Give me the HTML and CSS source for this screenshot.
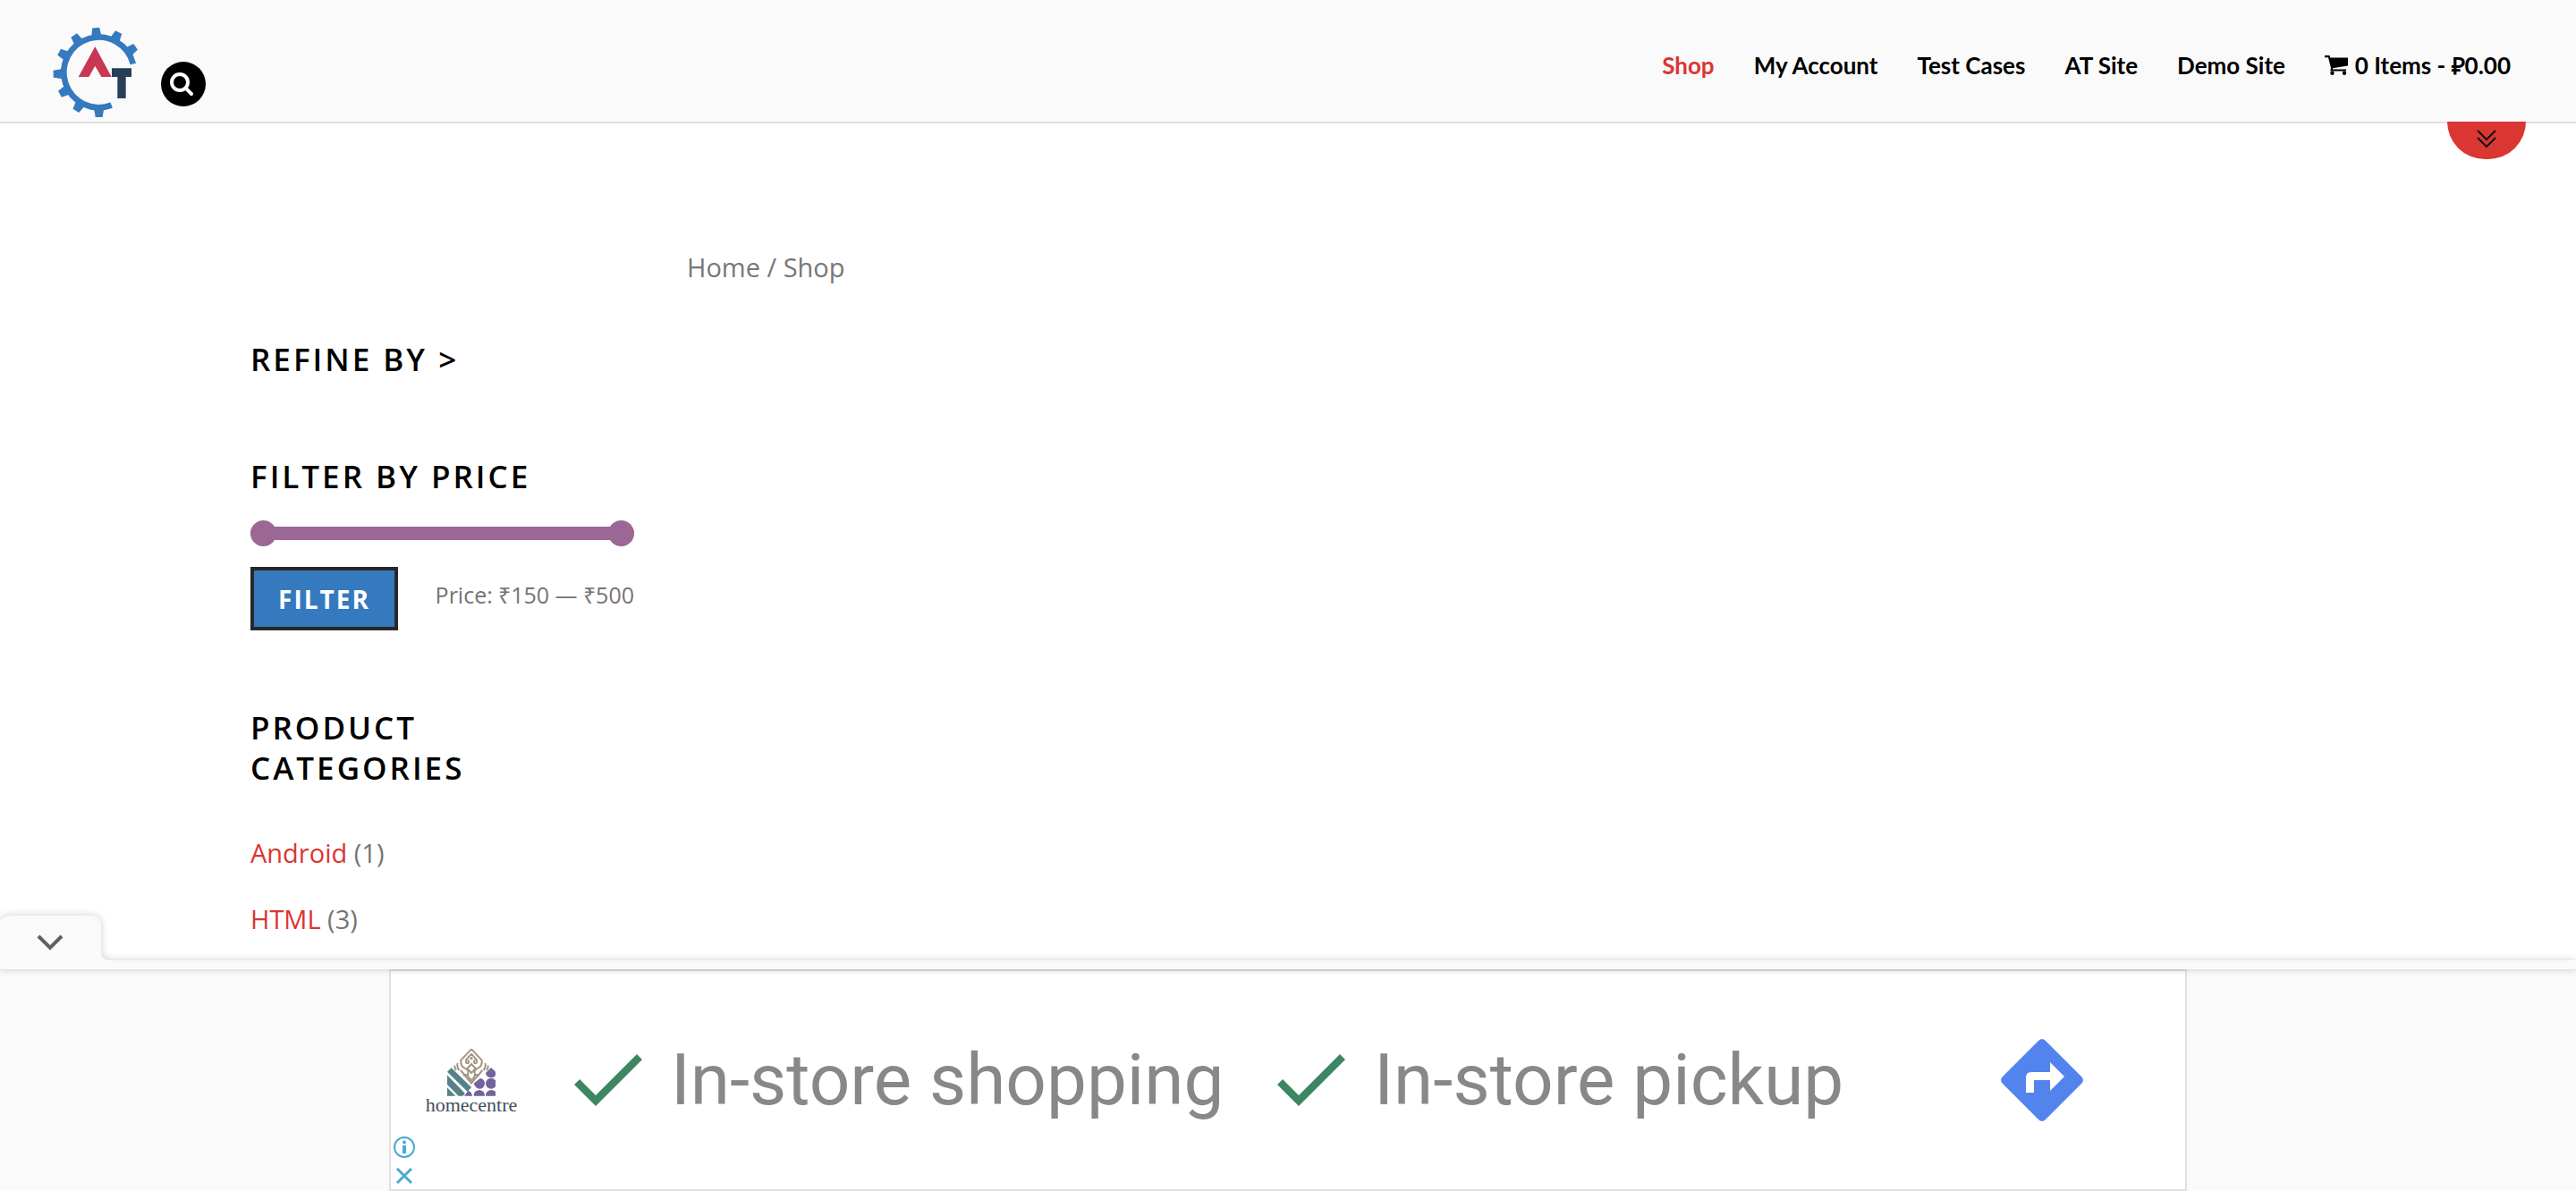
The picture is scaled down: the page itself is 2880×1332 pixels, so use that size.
FILE: index.html
```html
<!DOCTYPE html>
<html lang="en">
<head>
<meta charset="utf-8">
<meta name="viewport" content="width=device-width, initial-scale=1">
<title>Shop</title>
<link rel="stylesheet" href="styles.css">
</head>
<body>
<header class="header">
  <div class="brand">
    <a class="logo" href="#" aria-label="Home">
      <svg viewBox="54 90 297 306" width="99" height="102" aria-hidden="true">
        <path fill="none" stroke="#357abf" stroke-width="20" d="M326.500 214.500A118 118 0 1 0 254 353"/>
        <g fill="#357abf">
          <path id="tooth" d="M195 124L200 93H224L229 124Z" transform="rotate(-4 212 243)"/>
          <use href="#tooth" transform="rotate(30 212 243)"/>
          <use href="#tooth" transform="rotate(59 212 243)"/>
          <use href="#tooth" transform="rotate(-30 212 243)"/>
          <use href="#tooth" transform="rotate(-59 212 243)"/>
          <use href="#tooth" transform="rotate(-87 212 246)"/>
          <use href="#tooth" transform="rotate(-115 212 243)"/>
          <use href="#tooth" transform="rotate(-145 212 243)"/>
          <use href="#tooth" transform="rotate(-176 212 243)"/>
        </g>
        <path fill="#c93754" d="M199 156L254 258H220L199 221L178 258H143Z"/>
        <path fill="#283e57" d="M255 229H321V258H302V330H274V258H255Z"/>
      </svg>
    </a>
    <button class="search" type="button" aria-label="Search">
      <svg viewBox="420 207 150 150" width="50" height="50" aria-hidden="true">
        <g fill="none" stroke="#fff" stroke-linecap="round"><circle cx="483" cy="276" r="27" stroke-width="12"/><path stroke-width="12" d="M503 296L522 315"/></g>
      </svg>
    </button>
  </div>
  <nav class="nav">
    <a class="current" href="#">Shop</a>
    <a href="#">My Account</a>
    <a href="#">Test Cases</a>
    <a href="#">AT Site</a>
    <a href="#">Demo Site</a>
    <a class="cart" href="#">
      <svg viewBox="0 0 26 22" width="26" height="22" aria-hidden="true"><path d="M0 0H5.500L6.200 2.500H26V11.500L9 14.200V15.500H24V17.600H6.300L7 14L4 2.200H0Z"/><circle cx="8.500" cy="19.800" r="2.200"/><circle cx="22" cy="19.800" r="2.200"/></svg>
      <span>0 Items - ₽0.00</span>
    </a>
  </nav>
  <button class="toggle" type="button" aria-label="Expand header">
    <svg viewBox="0 0 22 20" width="22" height="20" aria-hidden="true"><path fill="none" stroke="#111" stroke-width="2" d="M1 1L11 11L21 1M1 9L11 19L21 9"/></svg>
  </button>
</header>

<div class="page">
  <aside class="sidebar">
    <section class="widget"><h2>REFINE BY &gt;</h2></section>
    <section class="widget">
      <h2>FILTER BY PRICE</h2>
      <form class="price-filter">
        <div class="slider">
          <input type="range" min="150" max="500" value="150" aria-label="Minimum price">
          <input type="range" min="150" max="500" value="500" aria-label="Maximum price">
        </div>
        <div class="price-row">
          <button class="filter" type="button">FILTER</button>
          <span class="price">Price: ₹150 — ₹500</span>
        </div>
      </form>
    </section>
    <section class="widget categories">
      <h2>PRODUCT CATEGORIES</h2>
      <ul>
        <li><a href="#">Android</a> (1)</li>
        <li><a href="#">HTML</a> (3)</li>
      </ul>
    </section>
  </aside>
  <main class="content">
    <nav class="crumbs" aria-label="Breadcrumb"><a href="#">Home</a> / Shop</nav>
  </main>
</div>

<div class="dock">
  <div class="dock-edge">
    <button class="dock-tab" type="button" aria-label="Hide advertisement">
      <svg viewBox="0 0 122 50" width="122" height="50" aria-hidden="true">
        <path fill="#fafafa" d="M0 8Q2 0 12 0H100Q113 0 113 13V39Q113 50 122 50H0Z"/>
        <path fill="none" stroke="#616161" stroke-width="4" d="M43 23L56 36L69 23"/>
      </svg>
    </button>
    <div class="dock-strip"></div>
  </div>
  <div class="ad">
    <div class="ad-side">
      <a class="ad-logo" href="#">
        <svg viewBox="120 38 162 160" width="54" height="54" aria-hidden="true">
          <g fill="none" stroke="#a39583" stroke-width="6">
            <path d="M201 41L166 78Q164 98 178 104Q196 112 188 128L174 126M201 41L236 78Q238 98 224 104Q206 112 214 128L228 126"/>
            <path d="M201 57L184 76Q179 90 190 88Q196 82 188 78M201 57L218 76Q223 90 212 88Q206 82 214 78"/>
            <path d="M201 91L215 106L201 121L187 106ZM165 112L201 155L238 112"/>
            <path d="M155 88Q151 100 160 112M146 96Q143 104 150 112M247 88Q251 100 242 112M256 96Q259 104 252 112M176 132Q190 120 192 136L201 146L210 136Q212 120 226 132"/>
          </g>
          <circle cx="201" cy="72" r="5" fill="#a39583"/>
          <g fill="#548288"><path d="M120 117L134 104L201 169L188 184ZM120 128L180 190L172 198H158L120 160ZM120 170L148 198H120Z"/></g>
          <g fill="#72639c"><path d="M267 103L282 117V129Q276 137 267 137Q250 135 249 121Z"/><circle cx="267" cy="156" r="18"/><path d="M209 156L231 138Q246 142 246 156Q244 174 228 174Q215 172 209 156ZM190 181Q202 183 204 198H177ZM209 198Q208 180 228 178Q246 180 246 198ZM249 198Q249 180 267 178Q276 178 282 184V198Z"/></g>
        </svg>
        <span>homecentre</span>
      </a>
      <div class="ad-controls">
        <button type="button" aria-label="About this ad"><svg viewBox="0 0 24 24" width="24" height="24" aria-hidden="true"><circle cx="12" cy="12" r="11" fill="none" stroke="#4babd0" stroke-width="2"/><circle cx="12" cy="6.500" r="2" fill="#4babd0"/><path fill="#4babd0" d="M10 10H14V19H10Z"/></svg></button>
        <button type="button" aria-label="Close ad"><svg viewBox="0 0 24 24" width="24" height="24" aria-hidden="true"><path fill="none" stroke="#4babd0" stroke-width="3" d="M4 4L20 20M20 4L4 20"/></svg></button>
      </div>
    </div>
    <div class="ad-claim"><svg viewBox="0 0 76 58" width="76" height="58" aria-hidden="true"><path fill="#3d8663" d="M0 34L6 28L24 46L70 0L76 6L24 58Z"/></svg><span>In-store shopping</span></div>
    <div class="ad-claim"><svg viewBox="0 0 76 58" width="76" height="58" aria-hidden="true"><path fill="#3d8663" d="M0 34L6 28L24 46L70 0L76 6L24 58Z"/></svg><span>In-store pickup</span></div>
    <a class="ad-go" href="#" aria-label="Directions">
      <svg viewBox="0 0 92 92" width="92" height="92" aria-hidden="true"><path fill="#5384ee" d="M42 2Q46-2 50 2L90 42Q94 46 90 50L50 90Q46 94 42 90L2 50Q-2 46 2 42Z"/><path fill="#fff" d="M28 60V43Q28 37 34 37H55V26L71 42L55 58V46H37V60Z"/></svg>
    </a>
  </div>
</div>
</body>
</html>
```
FILE: styles.css
```css
* { box-sizing: border-box; }

body {
  margin: 0;
  background: #fff;
  color: #747474;
  font-family: "Open Sans", sans-serif;
  font-size: 29px;
  line-height: 50px;
}

a { color: #da3632; text-decoration: none; }
button { margin: 0; padding: 0; border: 0; background: none; font: inherit; cursor: pointer; }
svg { display: block; flex: none; }

.header {
  position: relative;
  display: flex;
  justify-content: space-between;
  height: 138px;
  padding: 30px 73px 0 58px;
  background: #fafafa;
  border-bottom: 2px solid #e0e0e0;
}
.brand { display: flex; gap: 23px; }
.search {
  width: 50px;
  height: 50px;
  margin-top: 39px;
  border-radius: 50%;
  background: #000;
}
.nav {
  display: flex;
  gap: 44px;
  padding-top: 18px;
  font-family: Lato, sans-serif;
  font-size: 26px;
  font-weight: 700;
  line-height: 50px;
  height: 68px;
}
.nav a { color: #000; white-space: nowrap; }
.nav .current { color: #da3632; }
.nav .cart { display: flex; align-items: center; gap: 8px; }
.toggle {
  position: absolute;
  top: 136px;
  right: 56px;
  display: flex;
  justify-content: center;
  width: 88px;
  height: 42px;
  padding-top: 9px;
  border-radius: 0 0 44px 44px;
  background: #da3632;
}

.page {
  display: flex;
  gap: 59px;
  max-width: 2320px;
  margin: 0 auto;
  padding-top: 136px;
}
.sidebar { width: 429px; padding-top: 105px; }
.content { flex: 1; }
.crumbs { color: #777; }
.crumbs a { color: inherit; }

.widget { margin-bottom: 86px; }
.widget h2 {
  margin: 0;
  color: #000;
  font-size: 35px;
  font-weight: 600;
  letter-spacing: 3px;
  line-height: 45px;
}
.slider { display: grid; margin-top: 27px; }
.slider input {
  grid-area: 1 / 1;
  width: 100%;
  height: 29px;
  margin: 0;
  appearance: none;
  background: none;
  pointer-events: none;
}
.slider input::-webkit-slider-runnable-track {
  height: 15px;
  border-radius: 15px;
  background: #9b6794;
}
.slider input::-webkit-slider-thumb {
  width: 29px;
  height: 29px;
  margin-top: -7px;
  appearance: none;
  border-radius: 50%;
  background: #9b6794;
  pointer-events: auto;
}
.price-row {
  display: flex;
  justify-content: space-between;
  margin-top: 23px;
}
.price { font-size: 25px; line-height: 62px; white-space: nowrap; }
.filter {
  width: 165px;
  height: 71px;
  border: 4px solid #282828;
  background: #357abf;
  color: #fff;
  font-size: 28px;
  font-weight: 700;
  letter-spacing: 2px;
}
.categories h2 { max-width: 300px; }
.categories ul { display: grid; gap: 24px; margin: 0; padding: 48px 0 0; list-style: none; }

.dock { position: fixed; right: 0; bottom: 0; left: 0; background: #fafafa; }
.dock-edge { position: relative; z-index: 1; filter: drop-shadow(0 0 4px rgba(0, 0, 0, .2)); }
.dock-tab { position: absolute; bottom: 100%; left: 0; }
.dock-strip { height: 10px; background: #fafafa; }
.ad {
  position: relative;
  display: flex;
  align-items: center;
  width: 2010px;
  max-width: 100%;
  height: 248px;
  margin: 0 auto;
  border: 2px solid #e0e0e0;
  background: #fff;
}
.ad-side {
  display: flex;
  flex-direction: column;
  justify-content: space-between;
  align-self: stretch;
  width: 205px;
  padding: 86px 0 0 3px;
}
.ad-logo {
  display: flex;
  flex-direction: column;
  align-items: center;
  width: 174px;
  color: #414f5e;
  font-family: "Liberation Serif", serif;
  font-size: 22px;
  line-height: 20px;
}
.ad-controls { display: grid; gap: 8px; justify-items: start; padding-bottom: 3px; }
.ad-claim {
  display: flex;
  align-items: center;
  gap: 32px;
  margin-right: 60px;
  color: #888;
  font-family: Roboto, sans-serif;
  font-size: 80px;
  line-height: 94px;
  white-space: nowrap;
}
.ad-go { margin: 0 114px 0 auto; }
```
